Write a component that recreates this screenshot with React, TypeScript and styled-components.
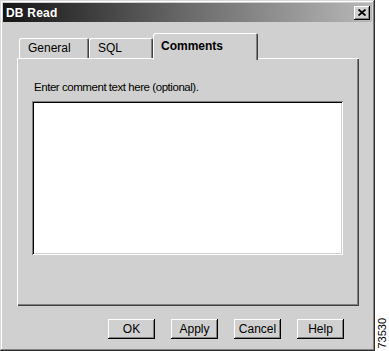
import styled, { createGlobalStyle } from "styled-components";

const GlobalStyle = createGlobalStyle`
  html, body {
    margin: 0;
    padding: 0;
    background: #ffffff;
  }
  body {
    font-family: "Liberation Sans", Arial, sans-serif;
  }
`;

function CloseGlyph() {
  return (
    <svg width="8" height="7" viewBox="0 0 8 7">
      <path d="M0.5 0.5 L7.5 6.5 M7.5 0.5 L0.5 6.5" stroke="#000" strokeWidth="1.8" />
    </svg>
  );
}

const tabs = [
  { label: "General", width: 70 },
  { label: "SQL", width: 64 },
  { label: "Comments", width: 105, active: true },
];

const buttons = ["OK", "Apply", "Cancel", "Help"];

function App() {
  return (
    <>
      <GlobalStyle />
      <Page>
        <Window>
          <TitleBar>
            <Title>DB Read</Title>
            <CloseButton>
              <CloseGlyph />
            </CloseButton>
          </TitleBar>
          <Body>
            <TabStrip>
              {tabs.map((t) => (
                <Tab key={t.label} $width={t.width} $active={!!t.active}>
                  {t.label}
                </Tab>
              ))}
            </TabStrip>
            <Panel>
              <Label>Enter comment text here (optional).</Label>
              <CommentBox />
            </Panel>
            <ButtonRow>
              {buttons.map((b) => (
                <DlgButton key={b}>{b}</DlgButton>
              ))}
            </ButtonRow>
          </Body>
        </Window>
        <Side>
          <FigureId>73530</FigureId>
        </Side>
      </Page>
    </>
  );
}

export default App;

const Page = styled.div`
  display: flex;
  flex-direction: row;
  width: 389px;
  height: 351px;
`;

const Window = styled.div`
  width: 375px;
  height: 351px;
  box-sizing: border-box;
  background: #d0d0d0;
  padding-top: 3px;
  box-shadow: inset -1px -1px #303030, inset 1px 1px #d8d8d8,
    inset -2px -2px #808080, inset 2px 2px #ffffff;
  display: flex;
  flex-direction: column;
`;

const TitleBar = styled.div`
  margin: 0 3px;
  height: 19px;
  padding: 0 2px 0 3px;
  display: flex;
  align-items: center;
  justify-content: space-between;
  background: linear-gradient(90deg, #151515 0%, #6a6a6a 50%, #b8b8b8 100%);
`;

const Title = styled.span`
  color: #ffffff;
  font-weight: bold;
  font-size: 12px;
  letter-spacing: 0.2px;
`;

const CloseButton = styled.div`
  width: 16px;
  height: 14px;
  box-sizing: border-box;
  background: #d0d0d0;
  display: flex;
  align-items: center;
  justify-content: center;
  box-shadow: inset -1px -1px #000, inset 1px 1px #fff, inset -2px -2px #808080;
`;

const Body = styled.div`
  display: flex;
  flex-direction: column;
  padding: 11px 16px 0 17px;
`;

const TabStrip = styled.div`
  display: flex;
  align-items: flex-end;
  height: 25px;
  padding-left: 2px;
`;

const Tab = styled.div<{ $width: number; $active: boolean }>`
  width: ${(p) => p.$width}px;
  height: ${(p) => (p.$active ? 27 : 20)}px;
  margin-bottom: ${(p) => (p.$active ? -2 : 0)}px;
  position: relative;
  z-index: ${(p) => (p.$active ? 2 : 0)};
  box-sizing: border-box;
  padding: ${(p) => (p.$active ? "0 0 2px 8px" : "0 0 0 9px")};
  display: flex;
  align-items: center;
  background: #d0d0d0;
  border-radius: 2px 2px 0 0;
  box-shadow: inset 1px 1px #ffffff, inset -1px 0 #404040, inset -2px 0 #808080;
  font-size: 12px;
  font-weight: ${(p) => (p.$active ? "bold" : "normal")};
  color: #000;
`;

const Panel = styled.div`
  height: 248px;
  box-sizing: border-box;
  padding: 22px 0 0 15px;
  background: #d0d0d0;
  box-shadow: inset 1px 1px #ffffff, inset -1px -1px #404040,
    inset -2px -2px #808080;
  display: flex;
  flex-direction: column;
`;

const Label = styled.div`
  font-size: 11.5px;
  line-height: 14px;
  letter-spacing: -0.45px;
  padding-left: 2px;
  color: #000;
`;

const CommentBox = styled.textarea`
  margin-top: 7px;
  width: 311px;
  height: 154px;
  box-sizing: border-box;
  border: none;
  outline: none;
  resize: none;
  background: #ffffff;
  box-shadow: inset 1px 1px #808080, inset -1px -1px #ffffff,
    inset 2px 2px #000000, inset -2px -2px #d0d0d0;
`;

const ButtonRow = styled.div`
  display: flex;
  justify-content: flex-end;
  gap: 16px;
  margin-top: 13px;
  padding-right: 15px;
`;

const DlgButton = styled.div`
  width: 47px;
  height: 20px;
  box-sizing: border-box;
  display: flex;
  align-items: center;
  justify-content: center;
  background: #d0d0d0;
  box-shadow: inset -1px -1px #000, inset 1px 1px #fff, inset -2px -2px #808080;
  font-family: "Liberation Sans Narrow", "Liberation Sans", Arial, sans-serif;
  font-size: 12px;
  color: #000;
`;

const Side = styled.div`
  flex: 1;
  display: flex;
  align-items: flex-end;
  justify-content: center;
  padding-bottom: 2px;
`;

const FigureId = styled.div`
  writing-mode: vertical-rl;
  transform: rotate(180deg);
  font-size: 11px;
  line-height: 11px;
  color: #000;
`;
